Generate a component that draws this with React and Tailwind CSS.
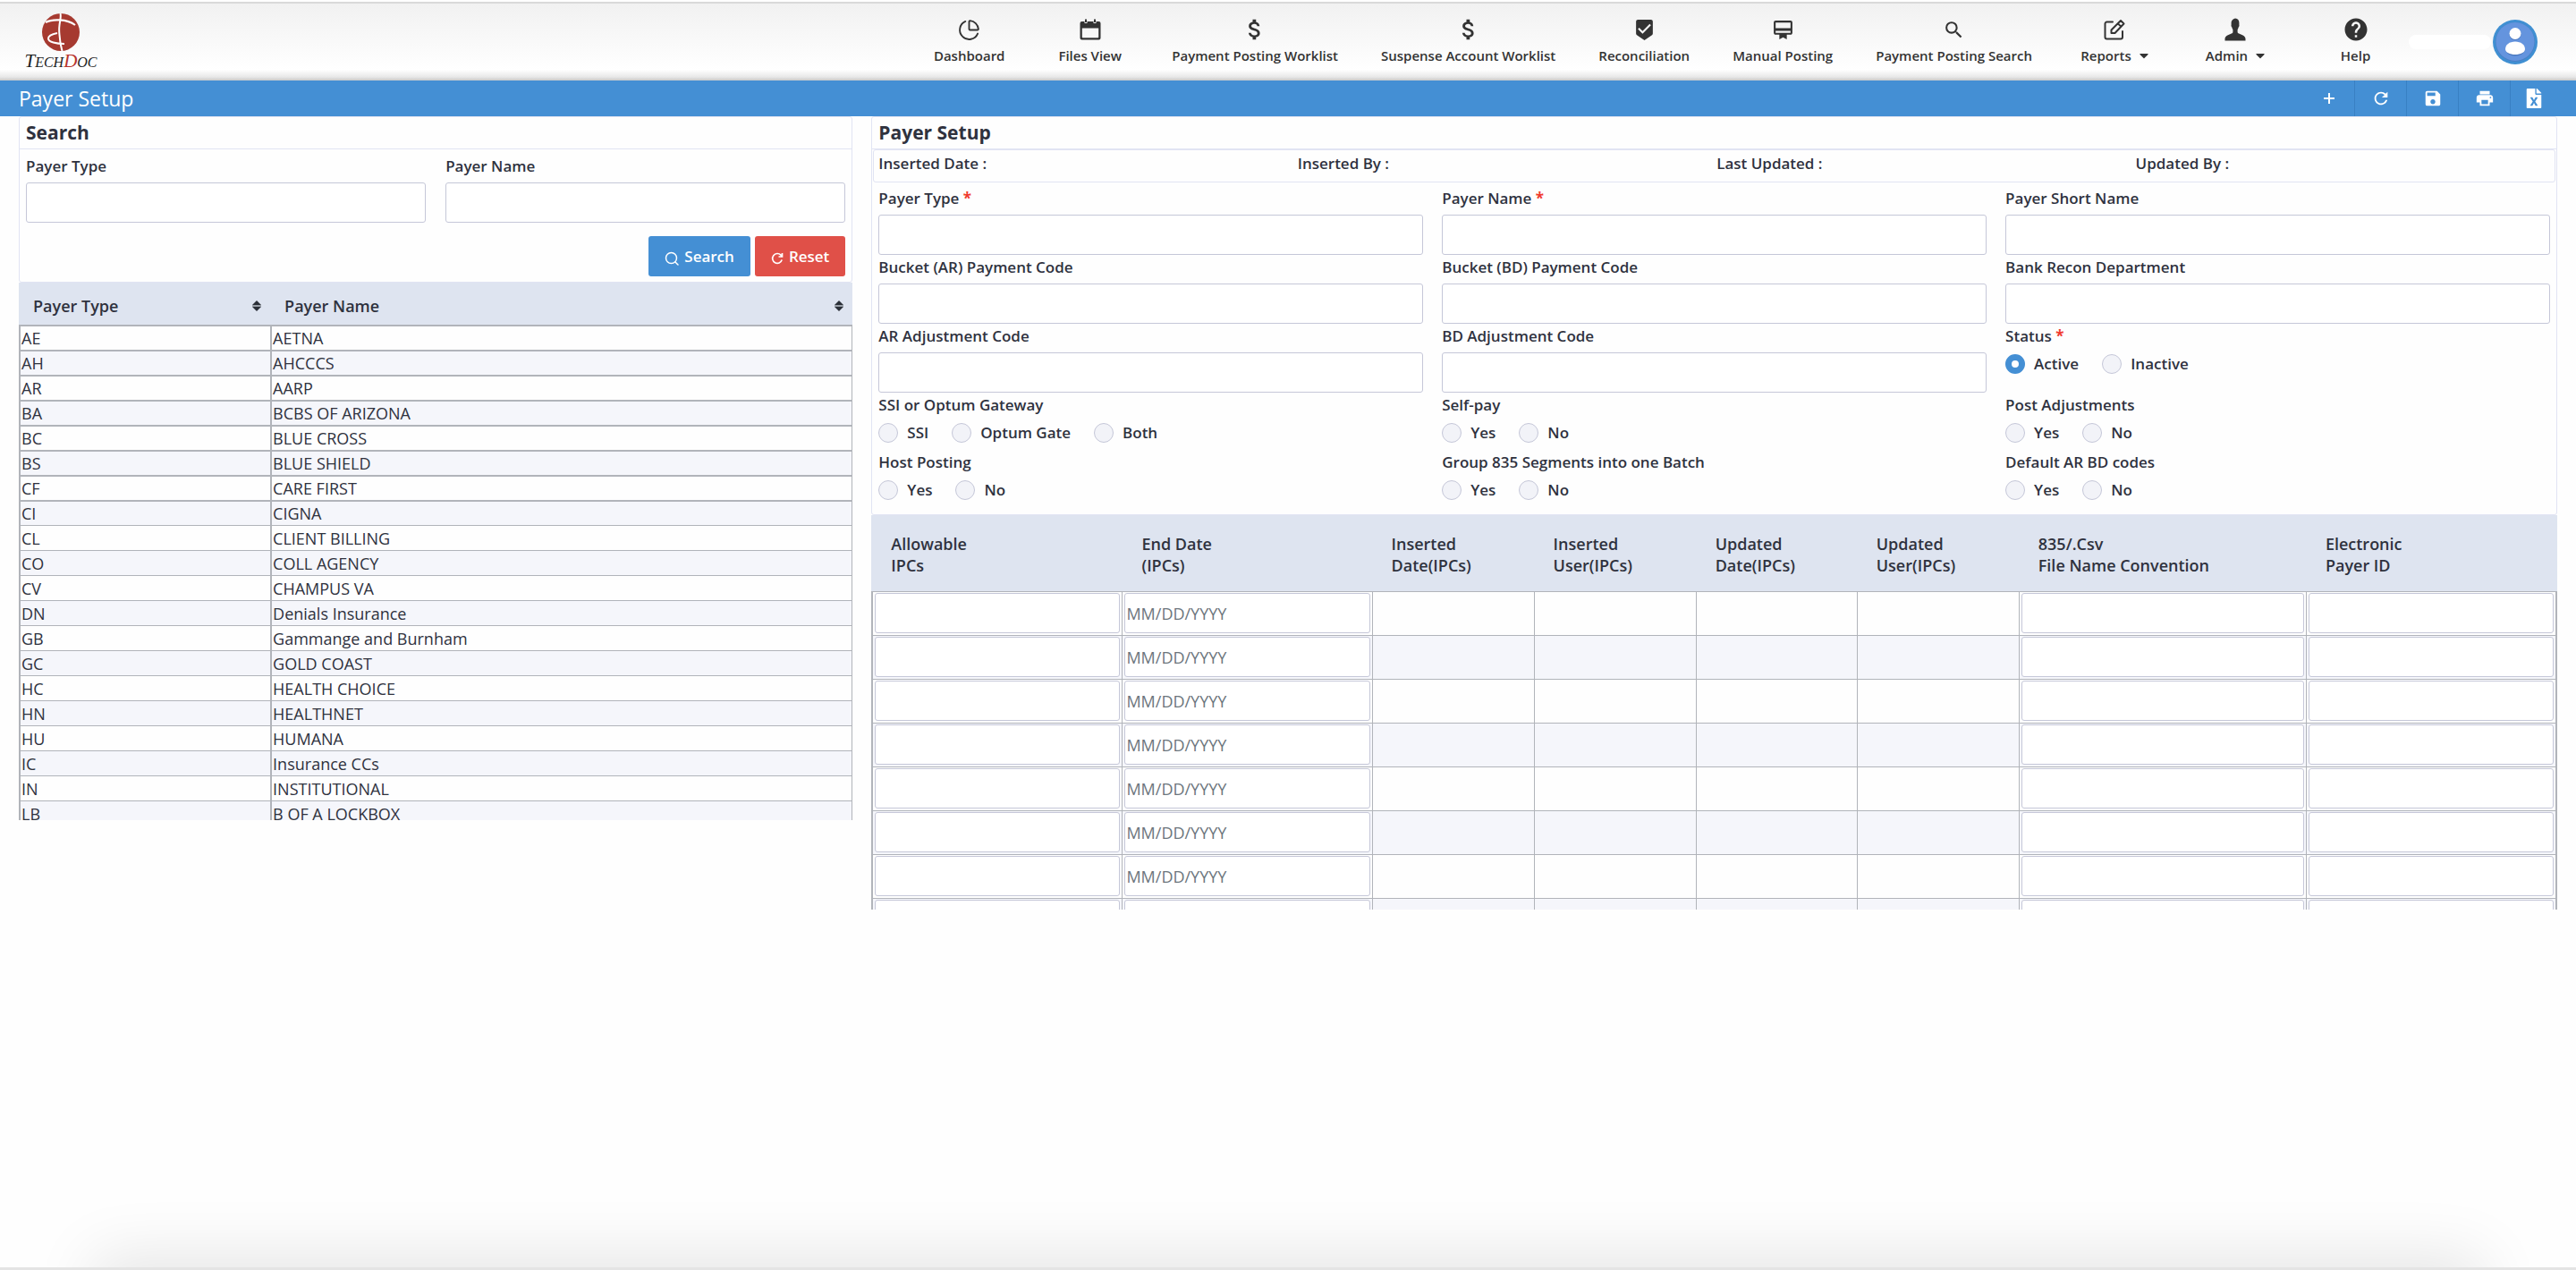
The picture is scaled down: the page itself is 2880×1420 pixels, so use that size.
import React from "react";
import { ChartPie } from "lucide-react";
import {
  MdAttachMoney,
  MdBeenhere,
  MdCardMembership,
  MdHelp,
  MdPrint,
  MdRefresh,
  MdSave,
  MdSearch,
} from "react-icons/md";
import { FaCaretDown, FaFileExcel } from "react-icons/fa";

function CalendarIcon() {
  return (
    <svg viewBox="0 0 24 24" className="size-6" aria-hidden="true">
      <path
        d="M2.500 3H5.500V5H8.500V3H15.500V5H18.500V3H21.500A2 2 0 0 1 23.500 5V21.500A2 2 0 0 1 21.500 23.500H2.500A2 2 0 0 1 .5 21.500V5A2 2 0 0 1 2.500 3ZM2.800 10.500V20.500A.8.8 0 0 0 3.600 21.300H20.400A.8.8 0 0 0 21.200 20.500V10.500Z"
        fill="currentColor"
        fillRule="evenodd"
      />
      <path d="M6 .5H8V4H6ZM16 .5H18V4H16Z" fill="currentColor" />
    </svg>
  );
}

function EditIcon() {
  return (
    <svg viewBox="0 0 24 24" className="size-6" fill="none" stroke="currentColor" strokeWidth="2" strokeLinejoin="round" aria-hidden="true">
      <path d="M10 3.500H3.500A2 2 0 0 0 1.500 5.500V20.500A2 2 0 0 0 3.500 22.500H19A2 2 0 0 0 21 20.500V14" strokeLinecap="round" />
      <path d="M19 2l3.500 3.500L12.500 16H8.500V12.500ZM15.800 5.200l3.400 3.400" />
    </svg>
  );
}

function PersonIcon() {
  return (
    <svg viewBox="0 0 24 26" className="h-[26px] w-6" fill="currentColor" aria-hidden="true">
      <path d="M12 0.500c3 .3 4.300 2 4.400 4.800.1 1-.1 1.600 0 2.400.3.900 0 2-.600 2.500-.3 1.300-.7 2-1.200 2.700v3.200c.3 1 1.200 1.500 2.600 2 3.400 1.200 6 2.400 6.300 5.300V25.500H.5V23.400c.3-2.900 2.900-4.100 6.300-5.300 1.400-.5 2.300-1 2.600-2v-3.200c-.5-.7-.9-1.400-1.200-2.700-.6-.5-.9-1.600-.6-2.500.1-.8-.1-1.400 0-2.400C7.700 3 9 1.500 12 .5z" />
    </svg>
  );
}

function PlusIcon() {
  return (
    <svg viewBox="0 0 14 14" className="size-[14px]" stroke="currentColor" strokeWidth="2" aria-hidden="true">
      <path d="M7 1v12M1 7h12" />
    </svg>
  );
}

function LensIcon() {
  return (
    <svg viewBox="0 0 16 16" className="mt-1 size-4" fill="none" stroke="currentColor" strokeWidth="1.500" aria-hidden="true">
      <circle cx="7.500" cy="7.500" r="6" />
      <path d="M12 12l3 3" strokeLinecap="round" />
    </svg>
  );
}

function ResetIcon() {
  return (
    <svg viewBox="0 0 14 14" className="mt-1 size-[14px]" fill="none" stroke="currentColor" strokeWidth="1.700" aria-hidden="true">
      <path d="M12.200 8.600A5.400 5.400 0 1 1 11 3.200L12.300 4.600M12.500 1v4H8.500" />
    </svg>
  );
}

function SortIcon() {
  return (
    <svg viewBox="0 0 10 12" className="h-3 w-[10px] shrink-0" aria-hidden="true">
      <path d="M5 0l5 5H0z" fill="#2b3038" />
      <path d="M0 5h10v2H0z" fill="#9aa0a8" />
      <path d="M5 12l5-5H0z" fill="#2b3038" />
    </svg>
  );
}

function Logo() {
  return (
    <a href="#home" className="flex w-[84px] flex-col items-center" aria-label="TechDoc">
      <svg viewBox="0 0 42 42" className="size-[42px]" aria-hidden="true">
        <circle cx="21" cy="21" r="21" fill="#a63a30" />
        <g fill="none" stroke="#fff">
          <path d="M20.500 0c1 4-.5 8-1 13-.5 4-.5 7 0 11 .5 8 1.500 13 3 18" strokeWidth="2" />
          <path d="M4 10C11 6 28 6 37 13" strokeWidth="2.200" />
          <path d="M17 22c-5 1-10 3-10 6 0 4 9 6 18 6" strokeWidth="2" />
        </g>
      </svg>
      <span className="font-['Liberation_Serif',serif] text-[16px] leading-[22px] whitespace-nowrap text-[#1d1d1d] italic">
        <span className="text-[21px]">T</span>ECH<span className="text-[21px] text-[#b8352d]">D</span>OC
      </span>
    </a>
  );
}

const NAV = [
  { label: "Dashboard", icon: <ChartPie size={25} strokeWidth={1.8} /> },
  { label: "Files View", icon: <CalendarIcon /> },
  { label: "Payment Posting Worklist", icon: <MdAttachMoney size={30} /> },
  { label: "Suspense Account Worklist", icon: <MdAttachMoney size={30} /> },
  { label: "Reconciliation", icon: <MdBeenhere size={25} /> },
  { label: "Manual Posting", icon: <MdCardMembership size={25} /> },
  { label: "Payment Posting Search", icon: <MdSearch size={25} /> },
  { label: "Reports", icon: <EditIcon />, menu: true },
  { label: "Admin", icon: <PersonIcon />, menu: true },
  { label: "Help", icon: <MdHelp size={30} /> },
];

function NavItem({ label, icon, menu }) {
  const content = (
    <>
      <span className="flex h-[30px] items-center justify-center">{icon}</span>
      <span className="flex items-center justify-center gap-[6px] leading-6">
        {label}
        {menu && <FaCaretDown size={16} className="-mr-1 shrink-0" />}
      </span>
    </>
  );
  const cls = "flex min-w-[135px] flex-col gap-0.5 px-6 pt-[14px] text-[15px] font-semibold whitespace-nowrap text-[#333]";
  return menu ? (
    <button type="button" className={cls}>{content}</button>
  ) : (
    <a href="#nav" className={cls}>{content}</a>
  );
}

function Header() {
  return (
    <header className="mt-0.5 flex h-[88px] items-start justify-between border-t-2 border-[#d9d9d9] bg-[linear-gradient(to_bottom,#f1f1f1_0px,#ffffff_74px,#e8e8e8_82px,#c9c9c9_86px)] pl-[26px]">
      <div className="pt-[11px]">
        <Logo />
      </div>
      <div className="flex items-start">
        <nav className="flex">
          {NAV.map((item) => (
            <NavItem key={item.label} {...item} />
          ))}
        </nav>
        <div className="mt-[18px] mr-[43px] flex items-center gap-0.5">
          <span className="-ml-2 h-4 w-[92px] rounded-lg bg-white" />
          <button type="button" aria-label="Account" className="size-[50px]">
            <svg viewBox="0 0 50 50" className="size-[50px]" aria-hidden="true">
              <circle cx="25" cy="25" r="25" fill="#3f8fd2" />
              <circle cx="25" cy="25" r="22" fill="#4c7fc4" />
              <circle cx="25" cy="24.500" r="21.500" fill="#6494de" />
              <circle cx="25" cy="16.500" r="6.500" fill="#4a78bf" />
              <ellipse cx="25" cy="33" rx="11" ry="7.500" fill="#4a78bf" />
              <circle cx="25" cy="15.500" r="6.500" fill="#fff" />
              <path d="M14 33c0-5 4.500-8.500 11-8.500S36 28 36 33c0 3.500-5 6-11 6s-11-2.500-11-6z" fill="#fff" />
            </svg>
          </button>
        </div>
      </div>
    </header>
  );
}

const TOOLS = [
  { label: "Add", icon: <PlusIcon /> },
  { label: "Refresh", icon: <MdRefresh size={22} /> },
  { label: "Save", icon: <MdSave size={22} /> },
  { label: "Print", icon: <MdPrint size={22} /> },
  { label: "Export to Excel", icon: <FaFileExcel size={22} /> },
];

function TitleBar() {
  return (
    <div className="flex h-10 items-center justify-between bg-[#448fd4] pr-[21px] pl-[21px] text-white">
      <h1 className="text-[23px] leading-10">Payer Setup</h1>
      <div className="flex h-full divide-x divide-[#3880c3]">
        {TOOLS.map((t) => (
          <button key={t.label} type="button" aria-label={t.label} className="flex h-full w-[58px] items-center justify-center last:w-[52px]">
            {t.icon}
          </button>
        ))}
      </div>
    </div>
  );
}

const INPUT = "block h-[45px] w-full rounded-[3px] border border-[#c5c7d8] bg-white px-2 text-lg";

function TextField({ label, id, required }) {
  return (
    <div className="pb-px">
      <label htmlFor={id} className="mb-[5px] block text-[17px] leading-[26px] font-semibold">
        {label}
        {required && <span className="font-bold text-[#f03a2e]"> *</span>}
      </label>
      <input id={id} type="text" className={INPUT} />
    </div>
  );
}

function RadioField({ label, name, options, value, required }) {
  return (
    <fieldset className="text-[17px] leading-[26px] font-semibold">
      <legend className="mb-[5px]">
        {label}
        {required && <span className="font-bold text-[#f03a2e]"> *</span>}
      </legend>
      <div className="flex gap-[26px]">
        {options.map((o) => (
          <label key={o} className="flex items-center gap-[10px]">
            <input
              type="radio"
              name={name}
              defaultChecked={o === value}
              className="size-[22px] appearance-none rounded-full border border-[#c5c7d8] bg-[#f2f3f8] checked:border-[7px] checked:border-[#448fd4] checked:bg-white"
            />
            {o}
          </label>
        ))}
      </div>
    </fieldset>
  );
}

function PanelTitle({ children }) {
  return <h2 className="h-9 border-b border-[#e1e4f3] px-[7px] text-[21px] leading-[34px] font-bold">{children}</h2>;
}

const PAYERS = [
  ["AE", "AETNA"],
  ["AH", "AHCCCS"],
  ["AR", "AARP"],
  ["BA", "BCBS OF ARIZONA"],
  ["BC", "BLUE CROSS"],
  ["BS", "BLUE SHIELD"],
  ["CF", "CARE FIRST"],
  ["CI", "CIGNA"],
  ["CL", "CLIENT BILLING"],
  ["CO", "COLL AGENCY"],
  ["CV", "CHAMPUS VA"],
  ["DN", "Denials Insurance"],
  ["GB", "Gammange and Burnham"],
  ["GC", "GOLD COAST"],
  ["HC", "HEALTH CHOICE"],
  ["HN", "HEALTHNET"],
  ["HU", "HUMANA"],
  ["IC", "Insurance CCs"],
  ["IN", "INSTITUTIONAL"],
  ["LB", "B OF A LOCKBOX"],
];

function SearchPanel() {
  return (
    <section className="min-w-0">
      <form className="rounded-[3px] border border-[#e1e4f3]" onSubmit={(e) => e.preventDefault()}>
        <PanelTitle>Search</PanelTitle>
        <div className="grid grid-cols-2 gap-x-[22px] px-[7px] pt-[6px]">
          <TextField label="Payer Type" id="search-type" />
          <TextField label="Payer Name" id="search-name" />
        </div>
        <div className="mt-[14px] flex justify-end gap-[5px] px-[7px] pb-[6px] text-[17px] font-semibold text-white">
          <button type="submit" className="flex h-[45px] items-center gap-[6px] rounded-[3px] bg-[#448fd4] px-[18px]">
            <LensIcon />
            Search
          </button>
          <button type="reset" className="flex h-[45px] items-center gap-[6px] rounded-[3px] bg-[#e05048] px-[18px]">
            <ResetIcon />
            Reset
          </button>
        </div>
      </form>
      <div className="max-h-[601px] overflow-hidden">
        <table className="w-full table-fixed border-separate border-spacing-0 text-lg">
          <colgroup>
            <col className="w-[281px]" />
            <col className="w-[651px]" />
          </colgroup>
          <thead>
            <tr className="h-[47px] bg-[#dee4f0] text-left text-lg">
              {["Payer Type", "Payer Name"].map((h) => (
                <th key={h} scope="col" className="pt-1 pr-[10px] pb-0 pl-4 font-semibold">
                  <button type="button" className="flex w-full items-center justify-between">
                    {h}
                    <SortIcon />
                  </button>
                </th>
              ))}
            </tr>
          </thead>
          <tbody>
            {PAYERS.map(([code, name], i) => (
              <tr key={code} className="even:bg-[#f5f6fb]">
                {[code, name].map((text, c) => (
                  <td
                    key={c}
                    className={
                      "h-7 border-l-2 border-[#b1b4ba] pr-0 pb-0 pl-px leading-[26px] last:border-r " +
                      (i < 8 ? "border-t-2 pt-0" : "border-t pt-px")
                    }
                  >
                    {text}
                  </td>
                ))}
              </tr>
            ))}
          </tbody>
        </table>
      </div>
    </section>
  );
}

const COLUMNS = [
  { head: ["Allowable", "IPCs"], width: "w-[280px]", input: true },
  { head: ["End Date", "(IPCs)"], width: "w-[279px]", input: true, placeholder: "MM/DD/YYYY" },
  { head: ["Inserted", "Date(IPCs)"], width: "w-[181px]" },
  { head: ["Inserted", "User(IPCs)"], width: "w-[181px]" },
  { head: ["Updated", "Date(IPCs)"], width: "w-[180px]" },
  { head: ["Updated", "User(IPCs)"], width: "w-[181px]" },
  { head: ["835/.Csv", "File Name Convention"], width: "w-[321px]", input: true },
  { head: ["Electronic", "Payer ID"], width: "w-[281px]", input: true },
];

function PayerPanel() {
  const yesNo = ["Yes", "No"];
  return (
    <section className="min-w-0">
      <form className="rounded-[3px] border border-[#e1e4f3]">
        <PanelTitle>Payer Setup</PanelTitle>
        <dl className="mx-px grid h-[37px] grid-cols-4 rounded-[3px] border border-[#e1e4f3] pl-[5px] text-[17px] leading-[30px] font-semibold">
          {["Inserted Date :", "Inserted By :", "Last Updated :", "Updated By :"].map((t) => (
            <div key={t}>
              <dt>{t}</dt>
            </div>
          ))}
        </dl>
        <div className="grid grid-cols-3 gap-x-[21px] px-[7px] pt-[5px]">
          <TextField label="Payer Type" id="payer-type" required />
          <TextField label="Payer Name" id="payer-name" required />
          <TextField label="Payer Short Name" id="payer-short-name" />
          <TextField label="Bucket (AR) Payment Code" id="bucket-ar" />
          <TextField label="Bucket (BD) Payment Code" id="bucket-bd" />
          <TextField label="Bank Recon Department" id="bank-recon" />
          <TextField label="AR Adjustment Code" id="ar-adjustment" />
          <TextField label="BD Adjustment Code" id="bd-adjustment" />
          <RadioField label="Status" name="status" options={["Active", "Inactive"]} value="Active" required />
        </div>
        <div className="grid grid-cols-3 gap-x-[21px] gap-y-[7px] px-[7px] pb-[14px]">
          <RadioField label="SSI or Optum Gateway" name="gateway" options={["SSI", "Optum Gate", "Both"]} />
          <RadioField label="Self-pay" name="self-pay" options={yesNo} />
          <RadioField label="Post Adjustments" name="post-adjustments" options={yesNo} />
          <RadioField label="Host Posting" name="host-posting" options={yesNo} />
          <RadioField label="Group 835 Segments into one Batch" name="group-835" options={yesNo} />
          <RadioField label="Default AR BD codes" name="default-codes" options={yesNo} />
        </div>
      </form>
      <div className="max-h-[441px] overflow-hidden">
        <table className="w-full table-fixed border-separate border-spacing-0 text-lg">
          <colgroup>
            {COLUMNS.map((c, i) => (
              <col key={i} className={c.width} />
            ))}
          </colgroup>
          <thead>
            <tr className="h-[85px] bg-[#dee4f0] text-left text-lg leading-6">
              {COLUMNS.map((c, i) => (
                <th key={i} scope="col" className="pt-0.5 pr-2 pb-0 pl-[22px] font-semibold">
                  {c.head[0]}
                  <br />
                  {c.head[1]}
                </th>
              ))}
            </tr>
          </thead>
          <tbody>
            {Array.from({ length: 8 }, (_, r) => (
              <tr key={r} className="even:bg-[#f5f6fb]">
                {COLUMNS.map((c, i) => (
                  <td key={i} className="h-[49px] border-t border-l border-[#b1b4ba] px-0.5 pt-px pb-0.5 first:border-l-2 last:border-r-2">
                    {c.input && (
                      <input
                        type="text"
                        aria-label={c.head.join(" ") + " row " + (r + 1)}
                        placeholder={c.placeholder}
                        className="block h-[45px] w-full rounded-[3px] border border-[#c5c7d8] bg-white px-px text-lg placeholder:text-[#6c757d]"
                      />
                    )}
                  </td>
                ))}
              </tr>
            ))}
          </tbody>
        </table>
      </div>
    </section>
  );
}

export default function App() {
  return (
    <div className="flex min-h-screen flex-col bg-[#fefefe] font-['Open_Sans',sans-serif] text-[#2f323e]">
      <Header />
      <TitleBar />
      <main className="grid flex-1 grid-cols-[932fr_1884fr] items-start gap-x-[21px] px-[21px]">
        <SearchPanel />
        <PayerPanel />
      </main>
      <footer className="h-[120px] overflow-hidden border-b-[3px] border-[#e4e4e4]">
        <div className="mx-[105px] mt-[117px] h-[120px] shadow-[0_-12px_70px_rgba(0,0,0,0.1)]" />
      </footer>
    </div>
  );
}
